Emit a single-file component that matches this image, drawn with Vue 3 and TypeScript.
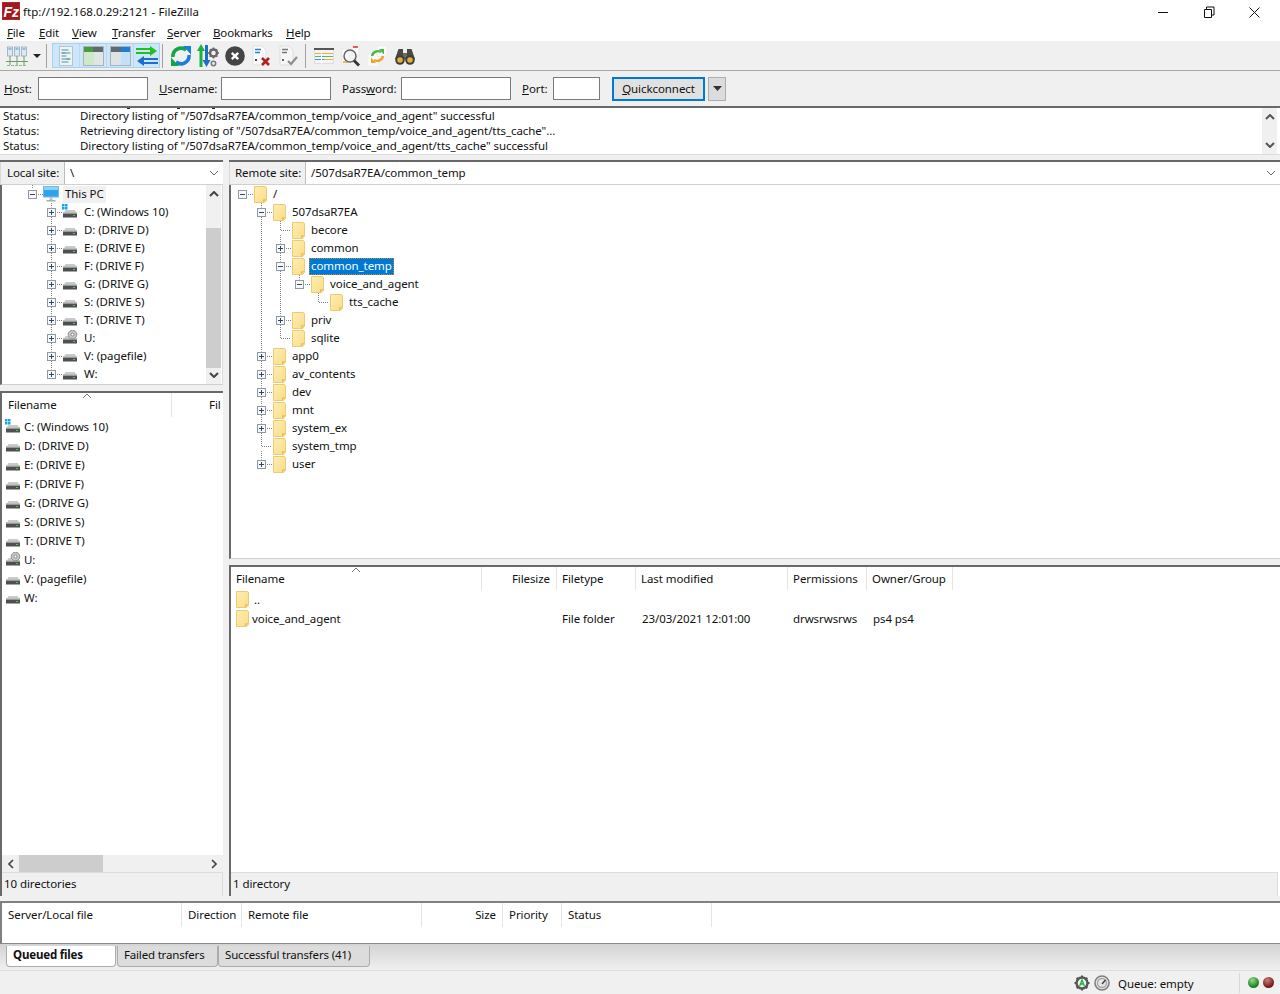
<script setup lang="ts">
type TreeRow = { label: string; depth: number; toggle?: '+' | '-'; icon: string; sel?: boolean; hover?: boolean }
const menus = [['F', 'ile'], ['E', 'dit'], ['V', 'iew'], ['T', 'ransfer'], ['S', 'erver'], ['B', 'ookmarks'], ['H', 'elp']]
const logs = [
  ['Status:', 'Directory listing of "/507dsaR7EA/common_temp/voice_and_agent" successful'],
  ['Status:', 'Retrieving directory listing of "/507dsaR7EA/common_temp/voice_and_agent/tts_cache"...'],
  ['Status:', 'Directory listing of "/507dsaR7EA/common_temp/voice_and_agent/tts_cache" successful'],
]
const drives = [
  ['C: (Windows 10)', 'win'], ['D: (DRIVE D)', 'drive'], ['E: (DRIVE E)', 'drive'], ['F: (DRIVE F)', 'drive'],
  ['G: (DRIVE G)', 'drive'], ['S: (DRIVE S)', 'drive'], ['T: (DRIVE T)', 'drive'], ['U:', 'cd'],
  ['V: (pagefile)', 'drive'], ['W:', 'drive'],
]
const localTree: TreeRow[] = [
  { label: 'This PC', depth: 0, toggle: '-', icon: 'pc', hover: true },
  ...drives.map(([label, icon]) => ({ label, icon, depth: 1, toggle: '+' as const })),
]
const remoteTree: TreeRow[] = [
  { label: '/', depth: 0, toggle: '-', icon: 'folder' },
  { label: '507dsaR7EA', depth: 1, toggle: '-', icon: 'folder' },
  { label: 'becore', depth: 2, icon: 'folder' },
  { label: 'common', depth: 2, toggle: '+', icon: 'folder' },
  { label: 'common_temp', depth: 2, toggle: '-', icon: 'folder', sel: true },
  { label: 'voice_and_agent', depth: 3, toggle: '-', icon: 'folder' },
  { label: 'tts_cache', depth: 4, icon: 'folder' },
  { label: 'priv', depth: 2, toggle: '+', icon: 'folder' },
  { label: 'sqlite', depth: 2, icon: 'folder' },
  { label: 'app0', depth: 1, toggle: '+', icon: 'folder' },
  { label: 'av_contents', depth: 1, toggle: '+', icon: 'folder' },
  { label: 'dev', depth: 1, toggle: '+', icon: 'folder' },
  { label: 'mnt', depth: 1, toggle: '+', icon: 'folder' },
  { label: 'system_ex', depth: 1, toggle: '+', icon: 'folder' },
  { label: 'system_tmp', depth: 1, icon: 'folder' },
  { label: 'user', depth: 1, toggle: '+', icon: 'folder' },
]
const linesOf = (rows: TreeRow[], base: number) => {
  const out: number[][] = []
  rows.forEach((r, i) => {
    const x = base + 19 * r.depth
    const px = Math.floor(x)
    const y = 9 + 18 * i + 0.5
    out.push([r.toggle ? px + 6 : px + 1, y, px + 11, y])
    if (i > 0) {
      const prevSib = (() => { for (let k = i - 1; k >= 0; k--) { if (rows[k].depth === r.depth) return k; if (rows[k].depth < r.depth) return -1 } return -1 })()
      const top = prevSib >= 0 ? 9 + 18 * prevSib + 5 : 9 + 18 * (i - 1) + 9
      out.push([x, top, x, r.toggle ? y - 5 : y])
    }
  })
  return out
}
const remoteLines = linesOf(remoteTree, 12.5)
const localLines = [...linesOf(localTree, 32.5), [32.5, 0, 32.5, 4]]
const remoteCols = [
  { t: 'Filename', w: 251 }, { t: 'Filesize', w: 75, r: true }, { t: 'Filetype', w: 79 },
  { t: 'Last modified', w: 152 }, { t: 'Permissions', w: 79 }, { t: 'Owner/Group', w: 86 },
]
const queueCols = [
  { t: 'Server/Local file', w: 180 }, { t: 'Direction', w: 60 }, { t: 'Remote file', w: 180 },
  { t: 'Size', w: 81, r: true }, { t: 'Priority', w: 59 }, { t: 'Status', w: 150 },
]
const toolsB = ['refresh', 'filter', 'cancel', 'xdoc', 'chkdoc']
const toolsC = ['queue', 'search', 'sync', 'binoc']
const toolsA = ['log', 'ltree', 'rtree', 'xfer']
</script>

<template>
  <div class="app">
    <svg class="defs" aria-hidden="true">
      <defs>
        <linearGradient id="fg" x1="0" y1="0" x2="1" y2="1"><stop offset="0" stop-color="#fdeeb4" /><stop offset="1" stop-color="#fbdc86" /></linearGradient>
        <symbol id="folder" viewBox="0 0 13 17"><path d="M.5.5h10.500l1.500 1v12.800l-2 2.200H.5z" fill="url(#fg)" stroke="#eccb72" /><path d="M9 16.500v-3.200h3.500z" fill="#e6bf5a" /></symbol>
        <symbol id="drive" viewBox="0 0 16 16"><path d="M2 8.500 3.500 6h9L14.500 8.500z" fill="#c9c9c9" /><rect x="1" y="8.500" width="14" height="5" fill="#4f4f4f" /><rect x="1" y="8.500" width="14" height="1" fill="#e3e3e3" /><rect x="11" y="11" width="2" height="1" fill="#3fd13f" /></symbol>
        <symbol id="win" viewBox="0 0 16 16"><use href="#drive" /><path d="M0 0h2.500v2.500H0zM3 0h2.500v2.500H3zM0 3h2.500v2.500H0zM3 3h2.500v2.500H3z" fill="#13a5ee" /></symbol>
        <symbol id="cd" viewBox="0 0 16 16"><use href="#drive" /><circle cx="10.500" cy="4.500" r="4.300" fill="#c7c7c7" stroke="#8e8e8e" /><circle cx="10.500" cy="4.500" r="1.500" fill="#fff" stroke="#888" /></symbol>
        <symbol id="pc" viewBox="0 0 16 16"><rect x=".5" y=".5" width="15" height="10.500" fill="#2fa4ee" stroke="#7fb8dc" /><rect x="1" y="1" width="14" height="3" fill="#8fd2f8" /><rect x="6.500" y="11" width="3" height="3" fill="#b8c6d0" /><rect x="3.500" y="14" width="9" height="1.500" fill="#9fb0bc" /></symbol>
      </defs>
    </svg>

    <header class="titlebar">
      <svg class="fz" width="18" height="18" viewBox="0 0 18 18"><rect width="18" height="18" fill="#bf2026" /><rect x="1" y="1" width="16" height="16" fill="#9e1a1f" /><text x="1.500" y="14.500" class="fzt">Fz</text></svg>
      <span class="ttl">ftp://192.168.0.29:2121 - FileZilla</span>
      <div class="caption">
        <svg width="46" height="20" viewBox="0 0 46 20"><path d="M18 10.500h10" stroke="#111" fill="none" /></svg>
        <svg width="46" height="20" viewBox="0 0 46 20"><path d="M18.500 7.500h7v8h-7zM20.500 7.500v-2.500h7.500v8h-2.500" stroke="#111" fill="none" /></svg>
        <svg width="46" height="20" viewBox="0 0 46 20"><path d="M17.500 5.500 27.500 15.500M27.500 5.500 17.500 15.500" stroke="#111" fill="none" /></svg>
      </div>
    </header>

    <nav class="menubar">
      <span v-for="m in menus" :key="m[0]" class="menu"><u>{{ m[0] }}</u>{{ m[1] }}</span>
    </nav>

    <div class="toolbar">
      <span class="tb">
        <svg width="22" height="22" viewBox="0 0 22 22"><g fill="#dfe8f2" stroke="#8aa0b5" stroke-width=".7"><rect x="1.500" y="2" width="5" height="9" /><rect x="8.500" y="2" width="5" height="9" /><rect x="15.500" y="2" width="5" height="9" /></g><path d="M2.500 4h3M9.500 4h3M16.500 4h3" stroke="#3d8fd6" /><path d="M4 11v5M11 11v5M18 11v5M0 16.500h22M4 17v3M11 17v3M18 17v3" stroke="#6d9a6d" fill="none" /><path d="M1 20.500h20" stroke="#8db98d" stroke-dasharray="3 1" /></svg>
      </span>
      <svg class="ddarrow" width="8" height="4" viewBox="0 0 8 4"><path d="M0 0h8L4 4z" fill="#222" /></svg>
      <i class="sep first"></i>
      <div class="hlgroup">
        <span v-for="t in toolsA" :key="t" class="tb on">
          <svg v-if="t === 'log'" width="16" height="22" viewBox="0 0 16 22"><rect x="1.500" y="1.500" width="13" height="19" fill="#eef3f6" stroke="#b8c3cc" /><path d="M3.500 5h7M3.500 8h9M3.500 11h5M3.500 14h9M3.500 17h7" stroke="#4f8fb5" /><path d="M3.500 8h4M8 14h4" stroke="#49b35a" /></svg>
          <svg v-else-if="t === 'ltree'" width="21" height="20" viewBox="0 0 21 20"><rect x=".5" y=".5" width="20" height="19" fill="#e1e5e6" stroke="#aab3b8" /><rect x="1" y="1" width="19" height="5" fill="#4a9a42" /><rect x="10" y="1" width="10" height="5" fill="#5f6b70" /><rect x="1" y="6" width="10" height="13" fill="#cde9c8" /></svg>
          <svg v-else-if="t === 'rtree'" width="21" height="20" viewBox="0 0 21 20"><rect x=".5" y=".5" width="20" height="19" fill="#dfe3e6" stroke="#aab3b8" /><rect x="1" y="1" width="19" height="5" fill="#5f6b70" /><rect x="11" y="1" width="9" height="5" fill="#1f7fd6" /><rect x="11" y="6" width="9" height="13" fill="#c4e0f7" /></svg>
          <svg v-else width="24" height="22" viewBox="0 0 24 22"><path d="M1 4h16M1 8h16" stroke="#1fc11f" stroke-width="2.200" /><path d="M15 1l7 5-7 5z" fill="#1fc11f" /><path d="M7 14h16M7 18h16" stroke="#1c6fd0" stroke-width="2.200" /><path d="M9 11l-7 5 7 5z" fill="#1c6fd0" /></svg>
        </span>
      </div>
      <i class="sep second"></i>
      <span v-for="t in toolsB" :key="t" class="tb">
        <svg v-if="t === 'refresh'" width="22" height="22" viewBox="0 0 22 22"><path d="M3 12A8 8 0 0 1 16 5" stroke="#16a34a" stroke-width="3.600" fill="none" /><path d="M13 1h8v8.500z" fill="#1c7fd6" /><path d="M19 10A8 8 0 0 1 6 17" stroke="#1c7fd6" stroke-width="3.600" fill="none" /><path d="M9 21H1v-8.500z" fill="#16a34a" /></svg>
        <svg v-else-if="t === 'filter'" width="22" height="24" viewBox="0 0 22 24"><path d="M4 23V6" stroke="#19b43a" stroke-width="3" /><path d="M0 7 4 0l4 7z" fill="#19b43a" /><path d="M9.500 1v16" stroke="#1c6fd0" stroke-width="3" /><path d="M5.500 16h8l-4 7z" fill="#1c6fd0" /><circle cx="16.500" cy="9" r="3.500" fill="none" stroke="#666" stroke-width="2.500" /><path d="M16.500 3.500v2M16.500 12.500v2M11 9h2M20 9h2M12.800 5.300l1.300 1.300M19 11.500l1.300 1.300M20.300 5.300l-1.400 1.300M14 11.500l-1.300 1.300" stroke="#666" stroke-width="1.600" /><circle cx="16.500" cy="19.500" r="2.200" fill="none" stroke="#777" stroke-width="1.500" /></svg>
        <svg v-else-if="t === 'cancel'" width="20" height="20" viewBox="0 0 20 20"><circle cx="10" cy="10" r="9.800" fill="#454545" /><path d="M6.800 6.800l6.400 6.400M13.200 6.800l-6.400 6.400" stroke="#fff" stroke-width="2.400" /></svg>
        <svg v-else-if="t === 'xdoc'" width="20" height="22" viewBox="0 0 20 22"><path d="M1 1h9l4 4v15H1z" fill="#fafafa" stroke="#e1e1e1" /><path d="M3 4.500h6M3 7.500h5" stroke="#2d7fd0" stroke-width="1.500" /><path d="M3 15h2" stroke="#444" stroke-width="2" /><path d="M10 13l7 7M17 13l-7 7" stroke="#b01e1e" stroke-width="2.600" /></svg>
        <svg v-else-if="t === 'chkdoc'" width="20" height="22" viewBox="0 0 20 22"><path d="M1 1h9l4 4v15H1z" fill="#f6f6f6" stroke="#dedede" /><path d="M3 4.500h6M3 7.500h5" stroke="#777" stroke-width="1.500" /><path d="M3 15h2" stroke="#666" stroke-width="2" /><path d="M9 16l3 3 6-7" stroke="#8d8d8d" stroke-width="2.200" fill="none" /></svg>
      </span>
      <i class="sep third"></i>
      <span v-for="t in toolsC" :key="t" class="tb">
        <svg v-if="t === 'queue'" width="20" height="16" viewBox="0 0 20 16"><rect x=".5" y=".5" width="19" height="15" fill="#f4f4f4" stroke="#ddd" /><rect x="0" y="0" width="20" height="2" fill="#555" /><path d="M1 5.500h18" stroke="#e8b04c" /><path d="M1 8.500h18" stroke="#56b860" /><path d="M1 11.500h9" stroke="#4d8dd6" /><path d="M10 11.500h9" stroke="#e8b04c" /><path d="M7.500 2v14" stroke="#fff" /></svg>
        <svg v-else-if="t === 'search'" width="20" height="22" viewBox="0 0 20 22"><rect x="1" y="4" width="7" height="15" fill="#fdfdfd" stroke="#e8e8e8" /><rect x="11" y="1" width="7" height="9" fill="#fdfdfd" stroke="#e8e8e8" /><path d="M12 2h5" stroke="#d23" stroke-width="1.500" /><path d="M2 17h5" stroke="#e8a02c" stroke-width="1.500" /><circle cx="9" cy="11" r="6" fill="#f2f4f5" fill-opacity=".7" stroke="#666" stroke-width="1.500" /><path d="M13 15.500l5 5" stroke="#333" stroke-width="2.800" /></svg>
        <svg v-else-if="t === 'sync'" width="20" height="20" viewBox="0 0 20 20"><rect x="0" y="8" width="10" height="12" fill="#fbfbfb" stroke="#eee" /><rect x="9" y="0" width="10" height="10" fill="#fbfbfb" stroke="#eee" /><path d="M4 10a6 6 0 0 1 9-4" stroke="#44b944" stroke-width="2.400" fill="none" /><path d="M11 3h5v5.500z" fill="#44b944" /><path d="M15 10a6 6 0 0 1-9 4" stroke="#f0a321" stroke-width="2.400" fill="none" /><path d="M8 17H3v-5.500z" fill="#f0a321" /></svg>
        <svg v-else width="20" height="18" viewBox="0 0 20 18"><path d="M3.500 2h4.500v5h4V2h4.500L20 12H0z" fill="#4a4a44" /><rect x="8" y="6" width="4" height="5" fill="#6a6a60" /><circle cx="5" cy="13" r="4.800" fill="#3f3f3a" /><circle cx="15" cy="13" r="4.800" fill="#3f3f3a" /><circle cx="5" cy="13" r="2.800" fill="#e6ad3a" /><circle cx="15" cy="13" r="2.800" fill="#e6ad3a" /></svg>
      </span>
    </div>

    <div class="quick">
      <label class="ql host"><u>H</u>ost:</label><span class="inp w110"></span>
      <label class="ql user"><u>U</u>sername:</label><span class="inp w110"></span>
      <label class="ql pass">Pass<u>w</u>ord:</label><span class="inp w110"></span>
      <label class="ql port"><u>P</u>ort:</label><span class="inp w47"></span>
      <button class="qc"><u>Q</u>uickconnect</button>
      <span class="qcdd"><svg width="9" height="5" viewBox="0 0 9 5"><path d="M0 0h9L4.500 5z" fill="#333" /></svg></span>
    </div>

    <section class="log">
      <svg class="cutmarks" width="240" height="3"><path d="M127 .5h3M177 .5h3M212 .5h3" stroke="#222" /></svg>
      <div class="logbody">
        <div v-for="(l, i) in logs" :key="i" class="logrow"><span class="lk">{{ l[0] }}</span><span>{{ l[1] }}</span></div>
      </div>
      <div class="vscroll logscroll">
        <svg width="10" height="6" viewBox="0 0 10 6"><path d="M1 5l4-4 4 4" stroke="#555" stroke-width="2" fill="none" /></svg>
        <svg width="10" height="6" viewBox="0 0 10 6"><path d="M1 1l4 4 4-4" stroke="#555" stroke-width="2" fill="none" /></svg>
      </div>
    </section>

    <main class="panes">
      <div class="col left">
        <div class="sitebar">
          <span class="sitelabel">Local site:</span>
          <span class="siteval">\</span>
          <svg width="10" height="6" viewBox="0 0 10 6"><path d="M1 1l4 4 4-4" stroke="#666" fill="none" /></svg>
        </div>
        <div class="tree localtree">
          <svg class="links" width="205" height="198"><line v-for="(l, i) in localLines" :key="i" :x1="l[0]" :y1="l[1]" :x2="l[2]" :y2="l[3]" /></svg>
          <div class="rows">
            <div v-for="r in localTree" :key="r.label" class="trow" :style="{ paddingLeft: 28 + 19 * r.depth + 'px' }">
              <span class="tog"><svg width="9" height="9" viewBox="0 0 9 9"><rect x=".5" y=".5" width="8" height="8" fill="#f7f8fa" stroke="#8f98a3" /><path :d="r.toggle === '+' ? 'M2 4.500h5M4.500 2v5' : 'M2 4.500h5'" stroke="#33466b" /></svg></span>
              <svg class="ico16" width="16" height="16"><use :href="'#' + r.icon" /></svg>
              <span class="tlabel" :class="{ hov: r.hover }">{{ r.label }}</span>
            </div>
          </div>
          <div class="vscroll treescroll">
            <svg width="10" height="6" viewBox="0 0 10 6"><path d="M1 5l4-4 4 4" stroke="#444" stroke-width="2" fill="none" /></svg>
            <span class="thumb"></span>
            <svg width="10" height="6" viewBox="0 0 10 6"><path d="M1 1l4 4 4-4" stroke="#444" stroke-width="2" fill="none" /></svg>
          </div>
        </div>
        <div class="list locallist">
          <div class="lhead">
            <span class="hc lname">Filename<svg class="sort" width="10" height="5" viewBox="0 0 10 5"><path d="M1 5l4-4 4 4" stroke="#777" fill="none" /></svg></span>
            <span class="hc lft">Fil</span>
          </div>
          <div class="lrows">
            <div v-for="d in drives" :key="d[0]" class="lrow">
              <svg width="16" height="16"><use :href="'#' + d[1]" /></svg><span>{{ d[0] }}</span>
            </div>
          </div>
          <div class="hscroll">
            <svg width="6" height="10" viewBox="0 0 6 10"><path d="M5 1 1 5l4 4" stroke="#444" stroke-width="1.600" fill="none" /></svg>
            <span class="hthumb"></span>
            <svg width="6" height="10" viewBox="0 0 6 10"><path d="M1 1l4 4-4 4" stroke="#444" stroke-width="1.600" fill="none" /></svg>
          </div>
          <div class="strip">10 directories</div>
        </div>
      </div>

      <div class="col right">
        <div class="sitebar">
          <span class="sitelabel">Remote site:</span>
          <span class="siteval">/507dsaR7EA/common_temp</span>
          <svg width="10" height="6" viewBox="0 0 10 6"><path d="M1 1l4 4 4-4" stroke="#666" fill="none" /></svg>
        </div>
        <div class="tree remotetree">
          <svg class="links" width="400" height="300"><line v-for="(l, i) in remoteLines" :key="i" :x1="l[0]" :y1="l[1]" :x2="l[2]" :y2="l[3]" /></svg>
          <div class="rows">
            <div v-for="r in remoteTree" :key="r.label" class="trow" :style="{ paddingLeft: 8 + 19 * r.depth + 'px' }">
              <span class="tog"><svg v-if="r.toggle" width="9" height="9" viewBox="0 0 9 9"><rect x=".5" y=".5" width="8" height="8" fill="#f7f8fa" stroke="#8f98a3" /><path :d="r.toggle === '+' ? 'M2 4.500h5M4.500 2v5' : 'M2 4.500h5'" stroke="#33466b" /></svg></span>
              <svg class="ico13" width="13" height="17"><use href="#folder" /></svg>
              <span class="tlabel" :class="{ sel: r.sel }">{{ r.label }}</span>
            </div>
          </div>
        </div>
        <div class="list remotelist">
          <div class="lhead">
            <span v-for="(c, i) in remoteCols" :key="c.t" class="hc rc" :class="{ ra: c.r }" :style="{ width: c.w + 'px' }">{{ c.t }}<svg v-if="i === 0" class="sort rsort" width="10" height="5" viewBox="0 0 10 5"><path d="M1 5l4-4 4 4" stroke="#777" fill="none" /></svg></span>
          </div>
          <div class="lrows rlist">
            <div class="rrow"><svg width="13" height="17"><use href="#folder" /></svg><span class="up">..</span></div>
            <div class="rrow">
              <svg width="13" height="17"><use href="#folder" /></svg>
              <span class="cname">voice_and_agent</span><span class="ctype">File folder</span><span class="cdate">23/03/2021 12:01:00</span><span class="cperm">drwsrwsrws</span><span>ps4 ps4</span>
            </div>
          </div>
          <div class="strip">1 directory</div>
        </div>
      </div>
    </main>

    <section class="queue">
      <span v-for="c in queueCols" :key="c.t" class="hc" :class="{ ra: c.r }" :style="{ width: c.w + 'px' }">{{ c.t }}</span>
    </section>

    <div class="tabs">
      <span class="tab active">Queued files</span>
      <span class="tab t2">Failed transfers</span>
      <span class="tab t3">Successful transfers (41)</span>
    </div>

    <footer class="status">
      <svg width="16" height="16" viewBox="0 0 16 16"><circle cx="8" cy="8" r="5.500" fill="#e9f6e9" stroke="#555" stroke-width="2.400" /><path d="M8 .5v2.500M8 13v2.500M.5 8H3M13 8h2.500M2.700 2.700l1.800 1.800M11.500 11.500l1.800 1.800M13.300 2.700l-1.800 1.800M4.500 11.500l-1.800 1.800" stroke="#555" stroke-width="2" /><path d="M5.700 11 8 5l2.300 6M6.500 9h3" stroke="#27a844" stroke-width="1.300" fill="none" /></svg>
      <svg class="dial" width="16" height="16" viewBox="0 0 16 16"><circle cx="8" cy="8" r="7" fill="#e8e8e8" stroke="#808080" stroke-width="1.600" /><circle cx="8" cy="8" r="4.500" fill="none" stroke="#a5a5a5" stroke-width="1.400" /><path d="M8 9l3.500-4" stroke="#444" stroke-width="1.500" /></svg>
      <span class="qstat">Queue: empty</span>
      <i class="sdiv"></i>
      <span class="led green"></span>
      <span class="led red"></span>
    </footer>
  </div>
</template>

<style>
html, body { margin: 0; background: #fff; }
</style>

<style scoped>
.app { width: 1280px; height: 994px; overflow: hidden; display: flex; flex-direction: column; background: #f0f0f0; font: 11.5px/15px "Noto Sans", "Open Sans", sans-serif; color: #111; letter-spacing: -0.08px; }
.defs { position: absolute; width: 0; height: 0; }
.titlebar { height: 24px; background: #fff; display: flex; align-items: center; padding-left: 2px; }
.fz { flex: none; margin-top: -2px; }
.fzt { font: italic bold 14px "Liberation Sans", sans-serif; fill: #fff; }
.ttl { margin-left: 3px; letter-spacing: 0.04px; margin-bottom: 1px; }
.caption { margin-left: auto; display: flex; margin-right: 2px; }
.menubar { height: 17px; background: #fff; display: grid; grid-template-columns: 32px 33px 40px 55px 46px 73px auto; justify-content: start; padding-left: 7px; align-items: center; letter-spacing: -0.16px; }
.toolbar { height: 29px; display: flex; align-items: center; border-bottom: 1px solid #a8a8a8; padding-left: 3px; box-sizing: content-box; }
.tb { width: 27px; height: 25px; display: flex; align-items: center; justify-content: center; flex: none; }
.ddarrow { margin-left: 3px; }
.sep { width: 1px; height: 24px; background: #a0a0a0; flex: none; }
.sep.first { margin-left: 5px; margin-right: 5px; }
.sep.second { margin-left: 2px; margin-right: 4px; }
.sep.third { margin-left: 3px; margin-right: 4px; }
.hlgroup { display: flex; background: #cde6f9; outline: 1px solid #a6d2f2; outline-offset: -1px; }
.tb.on + .tb.on { border-left: 1px solid #b5daf5; }
.tb.on { box-sizing: border-box; }
.quick { height: 35px; display: flex; align-items: center; padding-left: 4px; }
.ql { white-space: nowrap; flex: none; }
.host { width: 34px; }
.user { width: 62px; margin-left: 11px; }
.pass { width: 59px; margin-left: 11px; }
.port { width: 31px; margin-left: 11px; }
.inp { height: 23px; background: #fff; border: 1px solid #7a7a7a; box-sizing: border-box; flex: none; }
.w110 { width: 110px; }
.w47 { width: 47px; }
.qc { width: 93px; height: 24px; margin-left: 12px; background: #e1e1e1; border: 2px solid #0078d7; padding: 0; font: inherit; color: inherit; letter-spacing: inherit; }
.qcdd { width: 18px; height: 24px; margin-left: 3px; background: #dcdcdc; border: 1px solid #adadad; box-sizing: border-box; display: flex; align-items: center; justify-content: center; }
.log { height: 49px; border-top: 2px solid #696969; border-bottom: 1px solid #dcdcdc; background: #fff; display: flex; box-sizing: border-box; margin-bottom: 5px; position: relative; }
.cutmarks { position: absolute; left: 0; top: 0; }
.logbody { flex: 1; display: flex; flex-direction: column; justify-content: flex-end; overflow: hidden; padding-bottom: 1px; padding-left: 3px; }
.logrow { display: flex; height: 15px; flex: none; white-space: nowrap; }
.lk { width: 77px; flex: none; }
.vscroll { background: #f0f0f0; width: 15px; display: flex; flex-direction: column; align-items: center; justify-content: space-between; flex: none; }
.logscroll { padding: 6px 0; box-sizing: border-box; margin-right: 3px; }
.panes { height: 736px; display: flex; gap: 6px; }
.col { display: flex; flex-direction: column; position: relative; }
.left { width: 223px; flex: none; }
.right { flex: 1; min-width: 0; }
.sitebar { height: 25px; box-sizing: border-box; border-top: 2px solid #696969; display: flex; align-items: center; background: #fff; border-bottom: 1px solid #d0d0d0; padding-right: 4px; flex: none; }
.sitelabel { background: #f0f0f0; height: 22px; line-height: 21px; padding-left: 6px; border-right: 1px solid #bdbdbd; border-left: 1px solid #d8d8d8; box-sizing: border-box; flex: none; }
.left .sitelabel { width: 65px; }
.right .sitelabel { width: 77px; padding-left: 5px; }
.siteval { flex: 1; padding-left: 5px; margin-top: -1px; }
.tree { background: #fff; position: relative; border-left: 2px solid #696969; display: flex; flex: none; }
.localtree { height: 200px; box-sizing: border-box; border-bottom: 1px solid #cfcfcf; border-right: 1px solid #dcdcdc; margin-bottom: 6px; }
.remotetree { height: 374px; margin-bottom: 6px; border-bottom: 1px solid #cfcfcf; box-sizing: border-box; }
.links { position: absolute; left: 0; top: 0; pointer-events: none; }
.links line { stroke: #808080; stroke-dasharray: 1 1; stroke-width: 1; }
.localtree .links { left: -2px; }
.remotetree .links { left: -1px; }
.rows { flex: 1; min-width: 0; position: relative; }
.localtree .rows { margin-left: -2px; }
.remotetree .rows { margin-left: -1px; }
.trow { height: 18px; display: flex; align-items: center; white-space: nowrap; }
.tog { width: 9px; height: 9px; flex: none; display: block; line-height: 0; }
.ico16 { margin-left: 6px; flex: none; }
.ico13 { margin-left: 7px; flex: none; }
.tlabel { margin-left: 4px; padding: 0 2px; line-height: 16px; height: 17px; }
.hov { background: #f0f0f0; }
.sel { background: #0078d7; color: #fff; outline: 1px dotted #c48a1a; outline-offset: -1px; }
.treescroll { height: 100%; padding: 6px 0; box-sizing: border-box; margin-right: 1px; position: relative; }
.thumb { position: absolute; left: 0; right: 0; top: 43px; height: 140px; background: #cdcdcd; }
.list { flex: 1; min-height: 0; border-left: 2px solid #696969; border-top: 2px solid #696969; background: #fff; display: flex; flex-direction: column; position: relative; }
.lhead { height: 24px; display: flex; flex: none; overflow: hidden; }
.remotelist .lhead { height: 23px; }
.hc { box-sizing: border-box; padding-left: 6px; border-right: 1px solid #e5e5e5; line-height: 23px; height: 24px; position: relative; flex: none; white-space: nowrap; }
.hc.rc { padding-left: 5px; }
.hc.ra { text-align: right; padding-right: 6px; }
.lname { width: 170px; }
.lft { border: 0; flex: 1; padding-left: 37px; }
.sort { position: absolute; left: 80px; top: 0; }
.rsort { left: 120px; }
.lrows { flex: 1; padding-top: 0; }
.lrow { height: 19px; display: flex; align-items: center; padding-left: 3px; gap: 3px; white-space: nowrap; }
.hscroll { height: 17px; background: #f0f0f0; display: flex; align-items: center; justify-content: space-between; padding: 0 6px; position: relative; flex: none; }
.hthumb { position: absolute; left: 17px; top: 0; width: 84px; height: 17px; background: #cdcdcd; }
.strip { height: 23px; line-height: 22px; background: #f0f0f0; border-top: 1px solid #dcdcdc; border-right: 1px solid #dcdcdc; flex: none; padding-left: 2px; }
.remotelist .strip { margin-right: 2px; }
.rrow { height: 19px; display: flex; align-items: center; padding-left: 5px; white-space: nowrap; }
.up { margin-left: 5px; }
.cname { margin-left: 3px; width: 310px; flex: none; }
.ctype { width: 80px; flex: none; }
.cdate { width: 151px; flex: none; }
.cperm { width: 80px; flex: none; }
.queue { height: 43px; margin-top: 5px; background: #fff; border-top: 2px solid #808080; border-left: 2px solid #808080; border-bottom: 1px solid #8a8a8a; box-sizing: border-box; display: flex; flex: none; }
.tabs { height: 27px; display: flex; align-items: flex-start; padding: 2px 0 0 6px; background: linear-gradient(#d3d3d3, #f0f0f0); box-sizing: border-box; border-bottom: 1px solid #dcdcdc; flex: none; letter-spacing: -0.18px; }
.tab { height: 21px; line-height: 18px; border: 1px solid #acacac; border-top: 0; border-radius: 0 0 4px 4px; box-sizing: border-box; background: #dcdcdc; padding-left: 6px; flex: none; }
.tab.active { width: 110px; background: #fff; font-weight: 700; }
.t2 { width: 101px; margin-left: 1px; }
.t3 { width: 152px; }
.status { flex: 1; display: flex; align-items: center; padding-left: 1074px; }
.dial { margin-left: 4px; }
.qstat { margin-left: 8px; width: 120px; flex: none; padding-top: 2px; }
.sdiv { width: 1px; height: 20px; background: #d8d8d8; flex: none; margin-right: 4px; margin-left: 1px; }
.led { width: 11px; height: 11px; border-radius: 50%; flex: none; margin-left: 4px; }
.green { background: radial-gradient(circle at 40% 30%, #8fdc8f, #1b7a1b 70%); }
.red { background: radial-gradient(circle at 40% 30%, #c98080, #741414 70%); }
</style>
